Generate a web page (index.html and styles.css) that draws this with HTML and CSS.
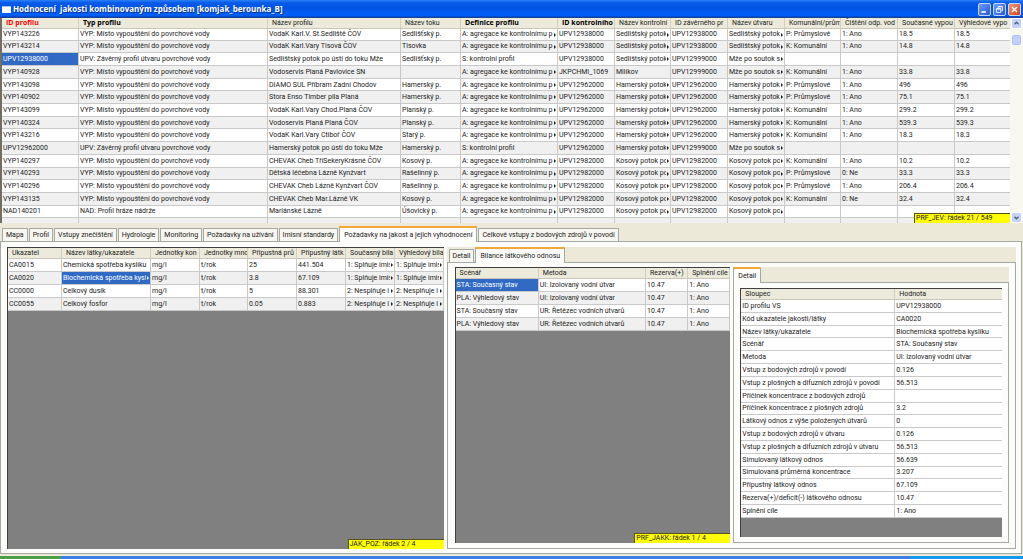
FILE: index.html
```
<!DOCTYPE html>
<html lang="cs">
<head>
<meta charset="utf-8">
<title>Hodnocení jakosti kombinovaným způsobem</title>
<link rel="stylesheet" href="styles.css">
</head>
<body>
<header class="titlebar">
  <span class="app-icon"></span>
  <h1 class="title">Hodnocení&nbsp; jakosti kombinovaným způsobem [komjak_berounka_B]</h1>
  <button class="win-btn" aria-label="Minimalizovat"><svg viewBox="0 0 13 13"><path d="M3 9.5h5" stroke="#fff" stroke-width="2"/></svg></button>
  <button class="win-btn" aria-label="Obnovit"><svg viewBox="0 0 13 13" fill="none" stroke="#fff"><path d="M5 5V3h5v5H8.500M5 3.300h5"/><path d="M3 5.500h5v4.500H3zM3 6h5"/></svg></button>
  <button class="win-btn close" aria-label="Zavřít"><svg viewBox="0 0 13 13"><path d="M3.500 3.500l6 6M9.500 3.500l-6 6" stroke="#fff" stroke-width="1.700"/></svg></button>
</header>

<section class="profiles">
  <div class="grid-view">
    <table class="grid profiles-grid">
      <colgroup><col class="w77"><col class="w189"><col class="w133"><col class="w60"><col class="w97"><col class="w57"><col class="w56"><col class="w57"><col class="w57"><col class="w56"><col class="w57"><col class="w57"><col class="w57"></colgroup>
      <thead><tr><th class="key">ID profilu<th class="strong">Typ profilu<th>Název profilu<th>Název toku<th class="strong">Definice profilu<th class="strong">ID kontrolního<th>Název kontrolní<th>ID závěrného pr<th>Název útvaru<th>Komunální/prům<th>Čištění odp. vod<th>Současné vypou<th>Výhledové vypo</tr></thead>
      <tbody>
      <tr class="first"><td>VYP143226<td>VYP: Místo vypouštění do povrchové vody<td>VodaK Karl.V. St.Sedliště ČOV<td>Sedlišťský p.<td class="more">A: agregace ke kontrolnímu p<td>UPV12938000<td class="more">Sedlištský potok<td>UPV12938000<td class="more">Sedlištský potok<td>P: Průmyslové<td>1: Ano<td>18.5<td>18.5</tr>
      <tr><td>VYP143214<td>VYP: Místo vypouštění do povrchové vody<td>VodaK Karl.Vary Tisová ČOV<td>Tisovka<td class="more">A: agregace ke kontrolnímu p<td>UPV12938000<td class="more">Sedlištský potok<td>UPV12938000<td class="more">Sedlištský potok<td>K: Komunální<td>1: Ano<td>14.8<td>14.8</tr>
      <tr><td class="sel">UPV12938000<td>UPV: Závěrný profil útvaru povrchové vody<td>Sedlištský potok po ústí do toku Mže<td>Sedlišťský p.<td>S: kontrolní profil<td>UPV12938000<td class="more">Sedlištský potok<td>UPV12999000<td class="more">Mže po soutok s<td><td><td><td></tr>
      <tr><td>VYP140928<td>VYP: Místo vypouštění do povrchové vody<td>Vodoservis Planá Pavlovice SN<td><td class="more">A: agregace ke kontrolnímu p<td>JKPCHMI_1069<td>Milíkov<td>UPV12999000<td class="more">Mže po soutok s<td>K: Komunální<td>1: Ano<td>33.8<td>33.8</tr>
      <tr><td>VYP143098<td>VYP: Místo vypouštění do povrchové vody<td>DIAMO SUL Příbram Zadní Chodov<td>Hamerský p.<td class="more">A: agregace ke kontrolnímu p<td>UPV12962000<td class="more">Hamerský potok<td>UPV12962000<td class="more">Hamerský potok<td>P: Průmyslové<td>1: Ano<td>496<td>496</tr>
      <tr><td>VYP140902<td>VYP: Místo vypouštění do povrchové vody<td>Stora Enso Timber pila Planá<td>Hamerský p.<td class="more">A: agregace ke kontrolnímu p<td>UPV12962000<td class="more">Hamerský potok<td>UPV12962000<td class="more">Hamerský potok<td>P: Průmyslové<td>1: Ano<td>75.1<td>75.1</tr>
      <tr><td>VYP143099<td>VYP: Místo vypouštění do povrchové vody<td>VodaK Karl.Vary Chod.Planá ČOV<td>Planský p.<td class="more">A: agregace ke kontrolnímu p<td>UPV12962000<td class="more">Hamerský potok<td>UPV12962000<td class="more">Hamerský potok<td>K: Komunální<td>1: Ano<td>299.2<td>299.2</tr>
      <tr><td>VYP140324<td>VYP: Místo vypouštění do povrchové vody<td>Vodoservis Planá Planá ČOV<td>Planský p.<td class="more">A: agregace ke kontrolnímu p<td>UPV12962000<td class="more">Hamerský potok<td>UPV12962000<td class="more">Hamerský potok<td>K: Komunální<td>1: Ano<td>539.3<td>539.3</tr>
      <tr><td>VYP143216<td>VYP: Místo vypouštění do povrchové vody<td>VodaK Karl.Vary Ctiboř ČOV<td>Starý p.<td class="more">A: agregace ke kontrolnímu p<td>UPV12962000<td class="more">Hamerský potok<td>UPV12962000<td class="more">Hamerský potok<td>K: Komunální<td>1: Ano<td>18.3<td>18.3</tr>
      <tr><td>UPV12962000<td>UPV: Závěrný profil útvaru povrchové vody<td>Hamerský potok po ústí do toku Mže<td>Hamerský p.<td>S: kontrolní profil<td>UPV12962000<td class="more">Hamerský potok<td>UPV12999000<td class="more">Mže po soutok s<td><td><td><td></tr>
      <tr><td>VYP140297<td>VYP: Místo vypouštění do povrchové vody<td>CHEVAK Cheb TříSekeryKrásné ČOV<td>Kosový p.<td class="more">A: agregace ke kontrolnímu p<td>UPV12982000<td class="more">Kosový potok po<td>UPV12982000<td class="more">Kosový potok po<td>K: Komunální<td>1: Ano<td>10.2<td>10.2</tr>
      <tr><td>VYP140293<td>VYP: Místo vypouštění do povrchové vody<td>Dětská léčebna Lázně Kynžvart<td>Rašelinný p.<td class="more">A: agregace ke kontrolnímu p<td>UPV12982000<td class="more">Kosový potok po<td>UPV12982000<td class="more">Kosový potok po<td>P: Průmyslové<td>0: Ne<td>33.3<td>33.3</tr>
      <tr><td>VYP140296<td>VYP: Místo vypouštění do povrchové vody<td>CHEVAK Cheb Lázně Kynžvart ČOV<td>Rašelinný p.<td class="more">A: agregace ke kontrolnímu p<td>UPV12982000<td class="more">Kosový potok po<td>UPV12982000<td class="more">Kosový potok po<td>P: Průmyslové<td>1: Ano<td>206.4<td>206.4</tr>
      <tr><td>VYP143135<td>VYP: Místo vypouštění do povrchové vody<td>CHEVAK Cheb Mar.Lázně VK<td>Kosový p.<td class="more">A: agregace ke kontrolnímu p<td>UPV12982000<td class="more">Kosový potok po<td>UPV12982000<td class="more">Kosový potok po<td>K: Komunální<td>0: Ne<td>32.4<td>32.4</tr>
      <tr><td>NAD140201<td>NAD: Profil hráze nádrže<td>Mariánské Lázně<td>Úšovický p.<td class="more">A: agregace ke kontrolnímu p<td>UPV12982000<td class="more">Kosový potok po<td>UPV12982000<td class="more">Kosový potok po<td><td><td><td></tr>
      <tr><td><td><td><td><td><td><td><td><td><td><td><td><td></tr>
      </tbody>
    </table>
    <div class="status">PRF_JEV: řádek 21 / 549</div>
  </div>
  <div class="scrollbar">
    <button class="scroll-btn" aria-label="Nahoru"><svg viewBox="0 0 11 11"><path d="M3 6.500L5.500 4 8 6.500" fill="none" stroke="#4d6185" stroke-width="1.600"/></svg></button>
    <span class="thumb"></span>
    <button class="scroll-btn" aria-label="Dolů"><svg viewBox="0 0 11 11"><path d="M3 4.500L5.500 7 8 4.500" fill="none" stroke="#4d6185" stroke-width="1.600"/></svg></button>
  </div>
</section>

<main class="tabbed main-tabs">
  <nav class="tabs">
    <button class="tab">Mapa</button><button class="tab">Profil</button><button class="tab">Vstupy znečištění</button><button class="tab">Hydrologie</button><button class="tab">Monitoring</button><button class="tab">Požadavky na užívání</button><button class="tab">Imisní standardy</button><button class="tab active">Požadavky na jakost a jejich vyhodnocení</button><button class="tab">Celkové vstupy z bodových zdrojů v povodí</button>
  </nav>
  <div class="page split">
    <div class="grid-view sunken indicators">
      <table class="grid">
        <colgroup><col class="w54"><col class="w89"><col class="w49"><col class="w48"><col class="w49"><col class="w49"><col class="w49"><col class="w49"></colgroup>
        <thead><tr><th>Ukazatel<th>Název látky/ukazatele<th>Jednotky kon<th>Jednotky mno<th>Přípustná prů<th>Přípustný látk<th>Současný bila<th>Výhledový bila</tr></thead>
        <tbody>
        <tr><td>CA0015<td>Chemická spotřeba kyslíku<td>mg/l<td>t/rok<td>25<td>441.504<td class="more">1: Splňuje imis<td class="more">1: Splňuje imis</tr>
        <tr><td>CA0020<td class="more sel">Biochemická spotřeba kyslí<td>mg/l<td>t/rok<td>3.8<td>67.109<td class="more">1: Splňuje imis<td class="more">1: Splňuje imis</tr>
        <tr><td>CC0000<td>Celkový dusík<td>mg/l<td>t/rok<td>5<td>88.301<td class="more">2: Nesplňuje i<td class="more">2: Nesplňuje i</tr>
        <tr><td>CC0055<td>Celkový fosfor<td>mg/l<td>t/rok<td>0.05<td>0.883<td class="more">2: Nesplňuje i<td class="more">2: Nesplňuje i</tr>
        </tbody>
      </table>
      <div class="status">JAK_POZ: řádek 2 / 4</div>
    </div>
    <section class="tabbed balance">
      <nav class="tabs"><button class="tab">Detail</button><button class="tab active">Bilance látkového odnosu</button></nav>
      <div class="page split">
        <div class="grid-view sunken scenarios">
          <table class="grid">
            <colgroup><col class="w83"><col class="w107"><col class="w42"><col class="w42"></colgroup>
            <thead><tr><th>Scénář<th>Metoda<th>Rezerva(+)<th>Splnění cíle</tr></thead>
            <tbody>
            <tr><td class="sel">STA: Současný stav<td>UI: Izolovaný vodní útvar<td>10.47<td>1: Ano</tr>
            <tr><td>PLA: Výhledový stav<td>UI: Izolovaný vodní útvar<td>10.47<td>1: Ano</tr>
            <tr><td>STA: Současný stav<td>UR: Řetězec vodních útvarů<td>10.47<td>1: Ano</tr>
            <tr><td>PLA: Výhledový stav<td>UR: Řetězec vodních útvarů<td>10.47<td>1: Ano</tr>
            </tbody>
          </table>
          <div class="status">PRF_JAKK: řádek 1 / 4</div>
        </div>
        <section class="tabbed detail">
          <nav class="tabs"><button class="tab active">Detail</button></nav>
          <div class="page split">
            <div class="grid-view sunken">
              <table class="grid plain detail-grid">
                <colgroup><col class="w154"><col class="w108"></colgroup>
                <thead><tr><th>Sloupec<th>Hodnota</tr></thead>
                <tbody>
                <tr><td>ID profilu VS<td>UPV12938000</tr>
                <tr><td>Kód ukazatele jakosti/látky<td>CA0020</tr>
                <tr><td>Název látky/ukazatele<td>Biochemická spotřeba kyslíku</tr>
                <tr><td>Scénář<td>STA: Současný stav</tr>
                <tr><td>Metoda<td>UI: Izolovaný vodní útvar</tr>
                <tr><td>Vstup z bodových zdrojů v povodí<td>0.126</tr>
                <tr><td>Vstup z plošných a difuzních zdrojů v povodí<td>56.513</tr>
                <tr><td>Příčinek koncentrace z bodových zdrojů<td></tr>
                <tr><td>Příčinek koncentrace z plošných zdrojů<td>3.2</tr>
                <tr><td>Látkový odnos z výše položených útvarů<td>0</tr>
                <tr><td>Vstup z bodových zdrojů v útvaru<td>0.126</tr>
                <tr><td>Vstup z plošných a difuzních zdrojů v útvaru<td>56.513</tr>
                <tr><td>Simulovaný látkový odnos<td>56.639</tr>
                <tr><td>Simulovaná průměrná koncentrace<td>3.207</tr>
                <tr><td>Přípustný látkový odnos<td>67.109</tr>
                <tr><td>Rezerva(+)/deficit(-) látkového odnosu<td>10.47</tr>
                <tr><td>Splnění cíle<td>1: Ano</tr>
                </tbody>
              </table>
            </div>
          </div>
        </section>
      </div>
    </section>
  </div>
</main>
<footer class="taskbar"><span class="start"></span><span class="tasks"></span><span class="tray"></span></footer>
</body>
</html>
```
FILE: styles.css
```
* { box-sizing: border-box; }
body {
  margin: 0;
  height: 100vh;
  display: flex;
  flex-direction: column;
  overflow: hidden;
  background: #ece9d8;
  color: #222;
  font: 7px/10px Roboto, "Liberation Sans", sans-serif;
}
button { font: inherit; color: inherit; padding: 0; margin: 0; }
svg { display: block; width: 100%; height: 100%; }

.titlebar {
  display: flex;
  align-items: center;
  gap: 2px;
  height: 18px;
  padding: 0 2px;
  background: linear-gradient(#2a80f8, #0a5cea 15%, #0054e3 40%, #0061fb 85%, #0045c4 94%, #2a3f78);
}
.app-icon { width: 9px; height: 7px; background: #fff; border-top: 1px solid #9fc4ff; }
.title {
  flex: 1;
  margin: 0;
  color: #fff;
  font: bold 8px/14px "Open Sans", sans-serif;
  text-shadow: 1px 1px #0a2f8a;
}
.win-btn {
  width: 13px;
  height: 13px;
  border: 1px solid #c5d8fb;
  border-radius: 2px;
  background: linear-gradient(135deg, #6f9df8, #2657d8);
}
.win-btn.close { background: linear-gradient(135deg, #f09a80, #d63d12); }

.profiles { display: flex; flex: none; height: 205px; border-left: 2px solid #716f64; }
.grid-view { position: relative; flex: 1; min-width: 0; overflow: hidden; }
.sunken { background: #808080; border-top: 1px solid #404040; border-left: 1px solid #404040; }

.grid { width: 100%; table-layout: fixed; border-collapse: separate; border-spacing: 0; }
.grid th, .grid td {
  position: relative;
  height: 13px;
  overflow: hidden;
  white-space: nowrap;
  text-align: left;
  padding: 0 0 0 1px;
  border-right: 1px solid #c9c9c9;
  border-bottom: 1px solid #c9c9c9;
}
.grid th {
  height: 11px;
  padding-left: 4px;
  font-weight: normal;
  background: #ebeadb;
  border-right-color: #d3cfbf;
  border-bottom-color: #cbc7b8;
}
.grid th.strong, .grid th.key { font-weight: bold; color: #000; font-family: "Open Sans", sans-serif; }
.grid th.key { color: #f00; }
.grid td { background: #fff; }
.grid tr:nth-child(even) td { background: #f0f0f0; }
.grid.plain tr:nth-child(even) td { background: #fff; }
.grid tr td.sel { background: #316ac5; color: #fff; }
.more::after {
  content: "";
  position: absolute;
  top: 0;
  right: 0;
  width: 4px;
  height: 100%;
  background: inherit;
}
.more::before {
  content: "";
  position: absolute;
  z-index: 1;
  top: 4px;
  right: 1px;
  border: 2px solid transparent;
  border-left: 2px solid currentColor;
  border-right: 0;
}
.profiles-grid { height: 213px; }
.profiles-grid td { height: 12px; }
.profiles-grid .first td { height: 11px; }
.detail-grid { height: 229px; }
.detail-grid td { height: 12px; }

.w42 { width: 42px; } .w48 { width: 48px; } .w49 { width: 49px; } .w54 { width: 54px; }
.w56 { width: 56px; } .w57 { width: 57px; } .w60 { width: 60px; } .w77 { width: 77px; }
.w83 { width: 83px; } .w89 { width: 89px; } .w97 { width: 97px; } .w107 { width: 107px; }
.w108 { width: 108px; } .w133 { width: 133px; } .w154 { width: 154px; } .w189 { width: 189px; }

.status {
  position: absolute;
  right: 0;
  bottom: 0;
  width: 96px;
  height: 10px;
  padding-left: 1px;
  line-height: 9px;
  background: #ff0;
  border-top: 1px solid #55551a;
  border-left: 1px solid #55551a;
}

.scrollbar { display: flex; flex-direction: column; width: 13px; padding: 0 1px; background: #f8f7f0; }
.scroll-btn { width: 11px; height: 11px; border: 1px solid #fff; border-radius: 2px; background: #c3d3fd; }
.thumb { height: 10px; margin: 6px 1px auto; border-radius: 2px; background: #c1d1fb; border: 1px solid #aec2f2; }

.tabbed { display: flex; flex-direction: column; min-width: 0; }
.tabs { display: flex; align-items: flex-end; height: 15px; padding-left: 2px; gap: 1px; background: #ece9d8; }
.tab {
  height: 13px;
  padding: 0 3px;
  white-space: nowrap;
  background: #f7f6f0;
  border: 1px solid #a3aaa3;
  border-bottom: 0;
  border-radius: 1px 1px 0 0;
}
.tab.active {
  position: relative;
  height: 16px;
  padding: 0 4px;
  margin-bottom: -1px;
  background: #fcfcfb;
  border-top: 2px solid #f0a83a;
}
.page { flex: 1; min-height: 0; background: #fcfcfb; border: 1px solid #a3aaa3; }
.split { display: flex; }

.main-tabs { flex: 1; min-height: 0; padding: 3px 1px 2px 0; }
.main-tabs > .page { padding: 5px 5px 4px 6px; }
.indicators { flex: 436 1 0; }
.balance { flex: 570 1 0; margin-left: 3px; }
.balance > .page { padding: 4px 6px 5px 7px; }
.scenarios { flex: 275 1 0; }
.detail { flex: 276 1 0; margin-left: 3px; }
.detail > .page { padding: 5px 6px 5px 6px; }
.detail > .tabs { padding-left: 0; }

.taskbar { display: flex; flex: none; height: 3px; background: #3a81e3; }
.start { width: 6%; background: #4aa04a; }
.tasks { flex: 1; }
.tray { width: 11%; background: #139beb; }
```
